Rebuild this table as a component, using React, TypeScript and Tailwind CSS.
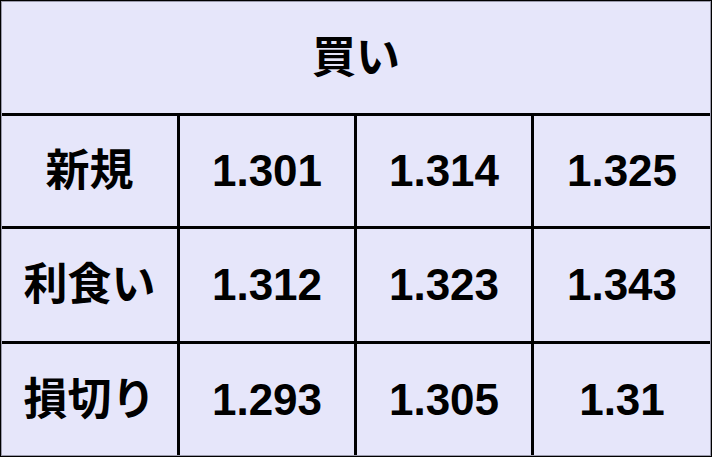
const rows = [
  { label: '新規', values: ['1.301', '1.314', '1.325'] },
  { label: '利食い', values: ['1.312', '1.323', '1.343'] },
  { label: '損切り', values: ['1.293', '1.305', '1.31'] },
];

const cell = 'flex items-center justify-center bg-[#e6e6fa] text-black font-bold text-[44px] leading-none';

export default function App() {
  return (
    <div
      className="w-[712px] h-[457px] border border-black bg-[#e6e6fa]"
      style={{ fontFamily: '"Liberation Sans", "Noto Sans CJK JP", sans-serif' }}
    >
      <div className="w-full h-full border border-[#9a9aac]">
        <div className="grid grid-cols-[175px_174px_174px_176px] grid-rows-[111px_110px_112px_111px] gap-[3px] bg-black">
          <div className={`${cell} col-span-4`}>買い</div>
          {rows.map(row => (
            <div key={row.label} className="contents">
              <div className={cell}>{row.label}</div>
              {row.values.map((v, i) => (
                <div key={i} className={cell}>
                  {v}
                </div>
              ))}
            </div>
          ))}
        </div>
      </div>
    </div>
  );
}
